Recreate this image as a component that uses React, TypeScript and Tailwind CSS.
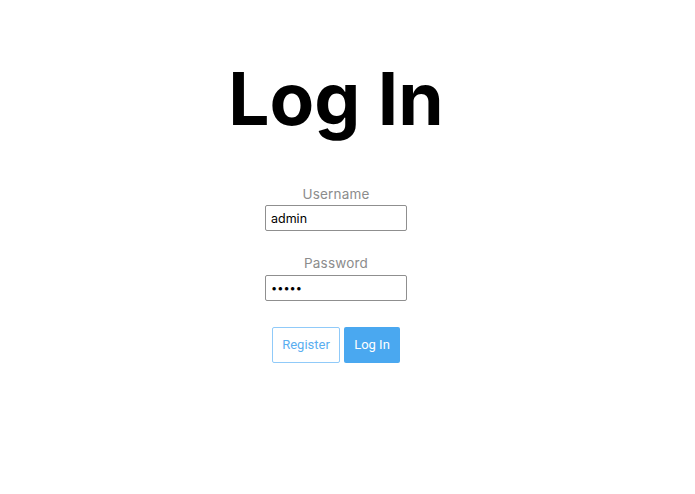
import React from "react";

export default function App() {
  return (
    <div className="w-[672px] h-[494px] bg-white flex flex-col items-center font-[family-name:Inter,sans-serif]">
      <h1 className="mt-[63px] text-[73px] leading-[72px] font-bold text-black">Log In</h1>
      <div className="mt-[49px] flex flex-col items-center">
        <label className="text-[13.5px] leading-[20px] font-normal text-[#8c8c8c] tracking-[0.2px]">Username</label>
        <input
          className="mt-px w-[142px] h-[26px] border border-[#8f8f8f] rounded-[2px] px-[5px] text-[12.5px] text-black outline-none"
          defaultValue="admin"
        />
        <label className="mt-[22px] text-[13.5px] leading-[20px] font-normal text-[#8c8c8c] tracking-[0.2px]">Password</label>
        <input
          type="password"
          className="mt-[2px] w-[142px] h-[26px] border border-[#8f8f8f] rounded-[2px] px-[5px] text-[11px] text-black outline-none"
          defaultValue="admin"
        />
        <div className="mt-[26px] flex gap-1 font-[family-name:Roboto,sans-serif]">
          <button className="w-[68px] h-9 border border-[#90caf9] rounded-[2px] text-[#5aaef0] text-[13px] bg-white">
            Register
          </button>
          <button className="w-14 h-9 rounded-[2px] bg-[#4aa8f0] text-white text-[13px]">Log In</button>
        </div>
      </div>
    </div>
  );
}
